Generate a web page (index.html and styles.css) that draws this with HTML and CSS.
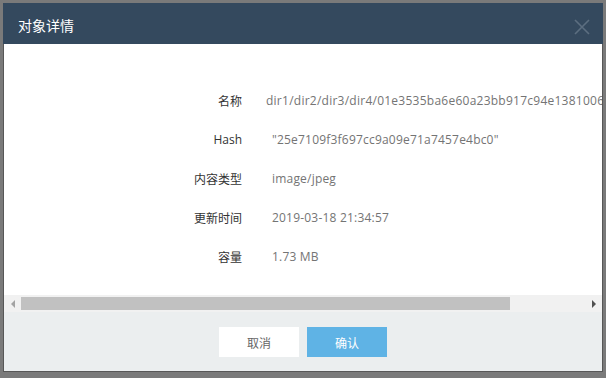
FILE: index.html
```html
<!DOCTYPE html>
<html lang="zh-CN">
<head>
    <meta charset="UTF-8">
    <meta name="viewport" content="width=device-width, initial-scale=1.0">
    <title>对象详情</title>
    <link rel="stylesheet" href="styles.css">
</head>
<body>
    <div class="overlay">
        <div class="dialog">
            <header class="dialog-header">
                <h2>对象详情</h2>
                <button class="close-button" aria-label="关闭">
                    <svg width="16" height="16" viewBox="0 0 16 16">
                        <path d="M1 1 L15 15 M15 1 L1 15" stroke="#5c6e80" stroke-width="1.6" fill="none"/>
                    </svg>
                </button>
            </header>
            <div class="dialog-body">
                <div class="detail-table">
                    <div class="detail-row">
                        <span class="label">名称</span>
                        <span class="value value-name">dir1/dir2/dir3/dir4/01e3535ba6e60a23bb917c94e1381006.jpg</span>
                    </div>
                    <div class="detail-row">
                        <span class="label">Hash</span>
                        <span class="value">"25e7109f3f697cc9a09e71a7457e4bc0"</span>
                    </div>
                    <div class="detail-row">
                        <span class="label">内容类型</span>
                        <span class="value">image/jpeg</span>
                    </div>
                    <div class="detail-row">
                        <span class="label">更新时间</span>
                        <span class="value">2019-03-18 21:34:57</span>
                    </div>
                    <div class="detail-row">
                        <span class="label">容量</span>
                        <span class="value">1.73 MB</span>
                    </div>
                </div>
            </div>
            <div class="scrollbar">
                <span class="scroll-arrow left"></span>
                <div class="scroll-track">
                    <div class="scroll-thumb"></div>
                </div>
                <span class="scroll-arrow right"></span>
            </div>
            <footer class="dialog-footer">
                <button class="btn btn-cancel">取消</button>
                <button class="btn btn-confirm">确认</button>
            </footer>
        </div>
    </div>
</body>
</html>
```

FILE: styles.css
```css
body {
    margin: 0;
    padding: 0;
    background-color: #7a7a7a;
    font-family: "Open Sans", "Noto Sans CJK SC", sans-serif;
    overflow: hidden;
}
.overlay {
    width: 606px;
    height: 378px;
    padding: 3px 0 0 3px;
    box-sizing: border-box;
}
.dialog {
    width: 600px;
    height: 369px;
    background-color: #ebeeef;
    border: 1px solid #575757;
    border-top: none;
    box-sizing: border-box;
    display: flex;
    flex-direction: column;
}
.dialog-header {
    height: 41px;
    flex-shrink: 0;
    background-color: #34495e;
    display: flex;
    align-items: center;
    justify-content: space-between;
    padding: 0 13px 0 15px;
    margin: 0 -1px;
}
.dialog-header h2 {
    margin: 0;
    font-size: 14px;
    font-weight: normal;
    color: #ffffff;
    font-family: "Noto Sans CJK SC", sans-serif;
    line-height: 1;
    padding-top: 2px;
}
.close-button {
    background: none;
    border: none;
    padding: 0;
    width: 16px;
    height: 16px;
    margin-top: 6px;
    cursor: pointer;
}
.close-button svg {
    display: block;
}
.dialog-body {
    height: 251px;
    background-color: #ffffff;
    overflow: hidden;
}
.detail-table {
    width: 692px;
    padding-top: 37px;
}
.detail-row {
    display: flex;
    align-items: center;
    height: 39px;
    font-size: 12px;
}
.label {
    width: 238px;
    text-align: right;
    color: #333333;
    flex-shrink: 0;
}
.value {
    margin-left: 30px;
    color: #747474;
    white-space: nowrap;
    letter-spacing: 0.2px;
}
.value-name {
    margin-left: 24px;
    letter-spacing: 0.25px;
}
.scrollbar {
    height: 17px;
    flex-shrink: 0;
    background-color: #f1f1f1;
    display: flex;
    align-items: center;
}
.scroll-arrow {
    width: 17px;
    height: 17px;
    flex-shrink: 0;
    display: flex;
    align-items: center;
    justify-content: center;
}
.scroll-arrow::before {
    content: "";
    width: 0;
    height: 0;
    border-top: 4px solid transparent;
    border-bottom: 4px solid transparent;
}
.scroll-arrow.left::before {
    border-right: 4px solid #a3a3a3;
}
.scroll-arrow.right::before {
    border-left: 4px solid #505050;
}
.scroll-track {
    flex: 1;
    height: 13px;
}
.scroll-thumb {
    width: 489px;
    height: 13px;
    background-color: #c1c1c1;
}
.dialog-footer {
    flex: 1;
    display: flex;
    justify-content: center;
    align-items: flex-start;
    gap: 8px;
    padding-top: 15px;
}
.btn {
    width: 80px;
    height: 30px;
    border: none;
    font-size: 12px;
    font-family: "Noto Sans CJK SC", sans-serif;
    cursor: pointer;
}
.btn-cancel {
    background-color: #ffffff;
    color: #666666;
}
.btn-confirm {
    background-color: #5fb3e5;
    color: #ffffff;
}
```
